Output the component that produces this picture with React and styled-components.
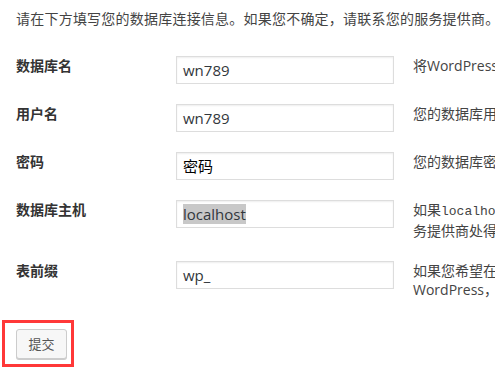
import React from "react";
import styled, { createGlobalStyle } from "styled-components";

const Global = createGlobalStyle`
  html, body {
    margin: 0;
    padding: 0;
    background: #fff;
    overflow: hidden;
  }
  body {
    font-family: "Open Sans", "Noto Sans CJK SC", sans-serif;
    color: #444;
  }
`;

const Page = styled.div`
  width: 720px;
  padding: 9px 0 0 16px;
  box-sizing: border-box;
`;

const Intro = styled.p`
  margin: 0 0 27px;
  font-size: 14px;
  line-height: 19.5px;
  letter-spacing: 0.22px;
  white-space: nowrap;
`;

const Form = styled.div`
  display: grid;
  grid-template-columns: 141px 218px 290px;
  column-gap: 19px;
  row-gap: 20px;
  align-items: start;
`;

const Label = styled.div`
  font-size: 14px;
  line-height: 19.5px;
  font-weight: 700;
  color: #333;
`;

const Field = styled.div`
  box-sizing: border-box;
  height: 28px;
  border: 1px solid #ddd;
  box-shadow: inset 0 1px 2px rgba(0, 0, 0, 0.07);
  background: #fff;
  padding: 1px 5px 0 6px;
  font-family: "Open Sans", "Noto Sans CJK SC", sans-serif;
  font-size: 15px;
  line-height: 25px;
  color: ${(p) => (p.$dark ? "#000" : "#32373c")};
  white-space: nowrap;
  overflow: hidden;
`;

const Selected = styled.span`
  background: #c8c8c8;
  color: #32373c;
`;

const Desc = styled.div`
  font-size: 14px;
  line-height: 19.5px;
  color: #444;
`;

const Code = styled.code`
  font-family: "Liberation Mono", monospace;
  font-size: 13px;
`;

const Actions = styled.div`
  margin-top: 20px;
`;

const Highlight = styled.div`
  display: inline-block;
  margin-left: -14px;
  border: 3px solid #ff3838;
  padding: 6px 4px 5px 11px;
`;

const Button = styled.button`
  display: block;
  box-sizing: border-box;
  height: 30px;
  padding: 0 11.5px;
  margin: 0;
  border: 1px solid #ccc;
  border-radius: 3px;
  background: #f7f7f7;
  box-shadow: 0 1px 0 #ccc;
  color: #555;
  font-family: "Open Sans", "Noto Sans CJK SC", sans-serif;
  font-size: 13px;
  line-height: 28px;
  cursor: pointer;
`;

const rows = [
  { label: "数据库名", value: "wn789", desc: <>将WordPress安装到哪个数据库？</> },
  { label: "用户名", value: "wn789", desc: <>您的数据库用户名。</> },
  { label: "密码", value: "密码", dark: true, desc: <>您的数据库密码。</> },
  {
    label: "数据库主机",
    value: <Selected>localhost</Selected>,
    desc: (
      <>
        如果<Code>localhost</Code>不能用，您通常可以从网站服务提供商处得到正确的信息。
      </>
    ),
  },
  {
    label: "表前缀",
    value: "wp_",
    desc: <>如果您希望在同一个数据库安装多个WordPress，请修改前缀。</>,
  },
];

export default function App() {
  return (
    <>
      <Global />
      <Page>
        <Intro>请在下方填写您的数据库连接信息。如果您不确定，请联系您的服务提供商。</Intro>
        <Form>
          {rows.map((r) => (
            <React.Fragment key={r.label}>
              <Label>{r.label}</Label>
              <Field $dark={r.dark}>{r.value}</Field>
              <Desc>{r.desc}</Desc>
            </React.Fragment>
          ))}
        </Form>
        <Actions>
          <Highlight>
            <Button type="button">提交</Button>
          </Highlight>
        </Actions>
      </Page>
    </>
  );
}
